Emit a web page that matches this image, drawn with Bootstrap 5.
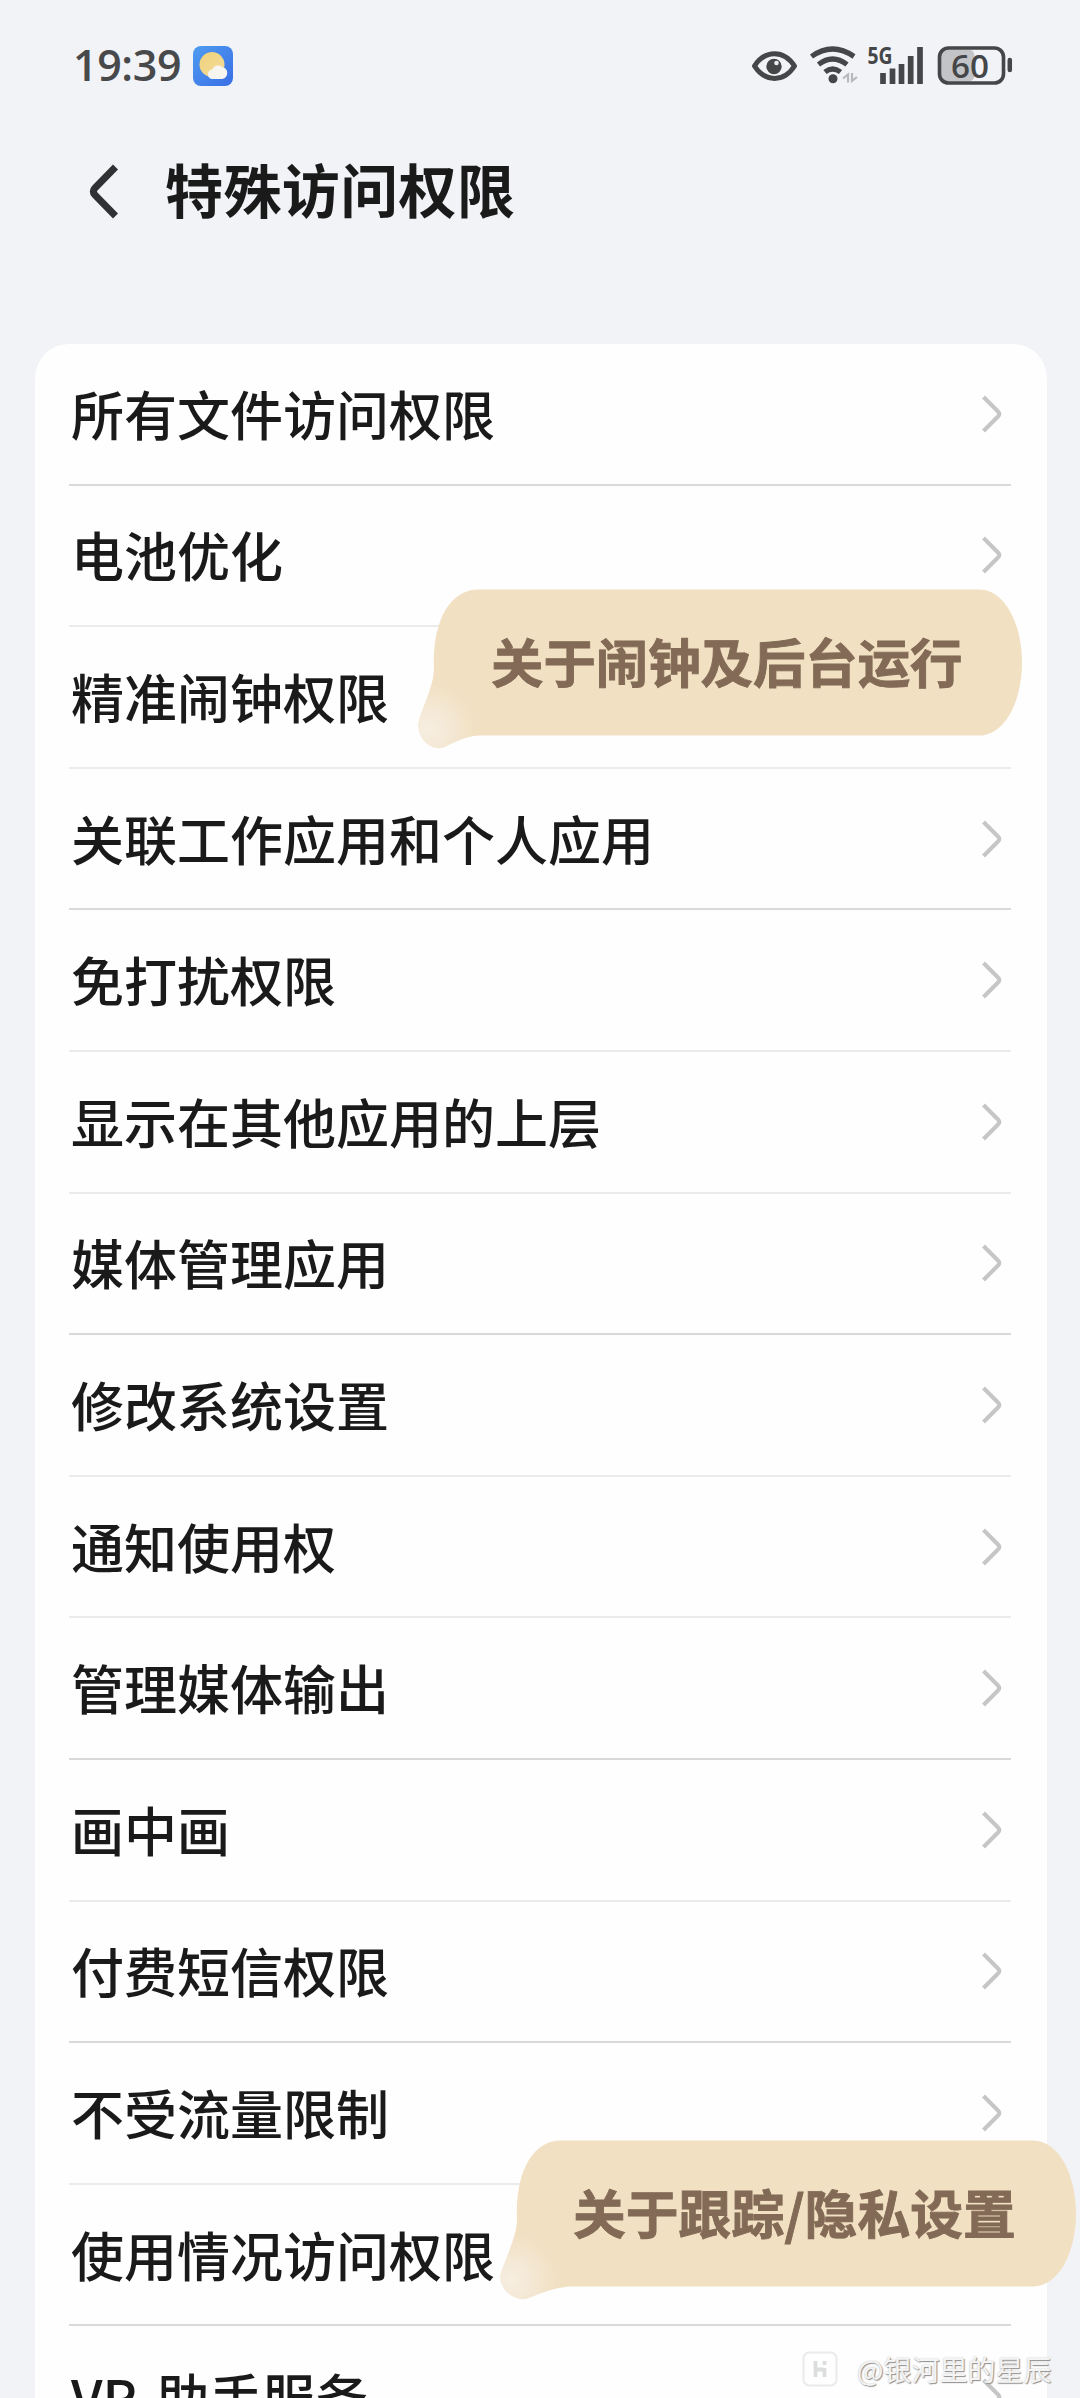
<!DOCTYPE html>
<html lang="zh-CN">
<head>
<meta charset="utf-8">
<meta name="viewport" content="width=device-width, initial-scale=1">
<title>特殊访问权限</title>
<link href="https://cdn.jsdelivr.net/npm/bootstrap@5.3.0/dist/css/bootstrap.min.css" rel="stylesheet">
<style>
body{background:#f1f3f7;font-family:"Noto Sans CJK SC",sans-serif;color:#1a1a1a;height:2398px;overflow:hidden}
.screen{width:1080px;height:2398px}
.statusbar{height:132px;padding:0 67px 0 73px}
.clock{font:600 43px/42px "Open Sans",sans-serif;color:#48494b;letter-spacing:-.4px;width:120px;white-space:nowrap;margin-top:-3px}
.titlebar{height:212px;padding:21px 0 0 88px}
.titlebar h1{font-size:58px;line-height:76px;font-weight:700;margin:-3px 0 0 45px;letter-spacing:.4px}
.settings{margin:0 33px 0 35px;border-radius:34px 34px 0 0;padding:0 36px 0 34px;background:#fefefe}
.settings .list-group-item{height:141.6px;padding:0 9px 0 2px;border:0;border-bottom:2px solid #ebebec;background:none;color:#1a1a1a;font-size:53px;line-height:70px;font-weight:500}
.settings .list-group-item span{margin-top:-2px;word-spacing:7px}
.settings .strong-line{border-bottom-color:#d9d9da}
.bubble-note{width:610px;height:164px}
.note-a{left:415px;top:587px}
.note-b{left:497px;top:2138px;width:583px}
.bubble-note svg{display:block}
.note-text{left:76px;top:38px;font-size:52.4px;line-height:70px;font-weight:700;color:#826a56;-webkit-text-stroke:.9px #826a56;white-space:nowrap}
.note-b .note-text{font-size:52.8px}
.watermark{left:802px;top:2348px;height:42px;gap:19px}
.watermark span{font-size:28px;line-height:42px;color:#f4f4f4;text-shadow:1px 1px 1px #909090,0 0 2px #c4c4c4;white-space:nowrap}
</style>
</head>
<body>
<main class="screen position-relative overflow-hidden">
  <header class="statusbar d-flex align-items-center justify-content-between">
    <div class="d-flex align-items-center">
      <span class="clock">19:39</span>
      <svg width="40" height="40" viewBox="0 0 40 40">
        <defs><linearGradient id="sky" x2="1" y2="1"><stop stop-color="#4e9cf0"/><stop offset="1" stop-color="#3a6ee6"/></linearGradient><linearGradient id="sun" x2="1" y2="1"><stop stop-color="#f0d07c"/><stop offset="1" stop-color="#f3dd9a"/></linearGradient></defs>
        <rect width="40" height="40" rx="8" fill="url(#sky)"/><circle cx="19" cy="18.5" r="12.5" fill="url(#sun)"/>
        <path d="M19 33a4.8 4.8 0 0 1 .2-9.500a6.500 6.500 0 0 1 10.600-2.200a6 6 0 0 1-.5 11.700z" fill="#f7f5f0"/>
      </svg>
    </div>
    <svg width="262" height="60" viewBox="751 36 262 60" fill="none" stroke="#454648">
      <path d="M754.500 66C765 49.500 784 49.500 794.500 66C784 82.500 765 82.500 754.500 66z" stroke-width="5" stroke-linejoin="round"/>
      <circle cx="774" cy="66.500" r="7.700" fill="#454648" stroke="none"/><circle cx="776.500" cy="63" r="2.300" fill="#e9ebee" stroke="none"/>
      <g stroke-width="5.200"><path d="M811.500 56.500Q832.500 41.500 854 56.500"/><path d="M818.500 64.500Q832.500 53.500 847 64.500"/><path d="M825 72Q832.500 66 840.500 72"/></g>
      <circle cx="833" cy="78.700" r="4.500" fill="#454648" stroke="none"/>
      <path d="M843 78.500l5-4v8M857 77l-5 4v-8" stroke="#b7b9bc" stroke-width="2.200"/>
      <text x="867.500" y="64" textLength="25" lengthAdjust="spacingAndGlyphs" font-family="Open Sans" font-weight="700" font-size="24" fill="#454648" stroke="none">5G</text>
      <path d="M883 73v11M892.500 68.500v15.500M901.500 64v20M910.700 56v28M920 47v37" stroke-width="5.700"/>
      <rect x="941" y="49.500" width="33.500" height="32" rx="6" fill="#c3c4c7" stroke="none"/>
      <rect x="939.500" y="48" width="64" height="35" rx="9" stroke-width="3.600"/>
      <path d="M1009.800 60v10" stroke-width="4.500" stroke-linecap="round"/>
      <text x="951" y="77.500" textLength="38" lengthAdjust="spacingAndGlyphs" font-family="Open Sans" font-weight="600" font-size="33" fill="#454648" stroke="none">60</text>
    </svg>
  </header>
  <div class="titlebar d-flex align-items-start">
    <svg width="32" height="76" viewBox="0 0 32 76" fill="none" stroke="#303133" stroke-width="7"><path d="M27.500 14L7 35Q3.500 38.500 7 42L27.500 63" stroke-linejoin="round"/></svg>
    <h1>特殊访问权限</h1>
  </div>
  <ul class="list-group list-group-flush settings" id="permissions"></ul>

  <div class="bubble-note note-a position-absolute">
    <svg width="610" height="164" viewBox="0 0 610 164">
      <defs><radialGradient id="tail" gradientUnits="userSpaceOnUse" cx="14" cy="142" r="47"><stop stop-color="#f7eee1"/><stop offset=".35" stop-color="#f5ead8"/><stop offset="1" stop-color="#f1e0c2"/></radialGradient></defs>
      <path fill="url(#tail)" d="M64 2.500H564C590 2.500 607 37 607 75.500S590 148.500 564 148.500H64C50 149.500 40 155 30 160C18 165 3 154 3 137C6 122 18 102 19 83C17 35 34 2.500 64 2.500z"/>
    </svg>
    <div class="note-text position-absolute">关于闹钟及后台运行</div>
  </div>
  <div class="bubble-note note-b position-absolute">
    <svg width="583" height="164" viewBox="0 0 583 164">
      <path fill="url(#tail)" d="M64 2.500H536C562 2.500 579 37 579 75.500S562 148.500 536 148.500H74C58 149 42 156 32 160C20 165 3 154 3 138C7 122 19 102 20 83C18 35 35 2.500 64 2.500z"/>
    </svg>
    <div class="note-text position-absolute">关于跟踪/隐私设置</div>
  </div>
  <div class="watermark position-absolute d-flex align-items-center">
    <svg width="36" height="36" viewBox="0 0 36 36" fill="none"><rect x="1.500" y="1.500" width="33" height="33" rx="6" stroke="#e9eaea" stroke-width="2"/><path d="M13.500 10v16M14 18.500h7.500M22.500 17v9M22.500 10v4" stroke="#dcdede" stroke-width="3.800"/></svg>
    <span>@银河里的星辰</span>
  </div>
</main>
<script>
const names=['所有文件访问权限','电池优化','精准闹钟权限','关联工作应用和个人应用','免打扰权限','显示在其他应用的上层','媒体管理应用','修改系统设置','通知使用权','管理媒体输出','画中画','付费短信权限','不受流量限制','使用情况访问权限','VR 助手服务'];
const strong=[0,3,6,9,11,13];
document.getElementById('permissions').innerHTML=names.map((n,i)=>`<li class="list-group-item d-flex align-items-center justify-content-between${strong.includes(i)?' strong-line':''}"><span>${n}</span><svg width="20" height="40" viewBox="0 0 20 40" fill="none" stroke="#c6c6c6" stroke-width="4"><path d="M1.500 3L16 17.500Q18.500 20 16 22.500L1.500 37" stroke-linejoin="round"/></svg></li>`).join('');
</script>
<script src="https://cdn.jsdelivr.net/npm/bootstrap@5.3.0/dist/js/bootstrap.bundle.min.js"></script>
</body>
</html>
